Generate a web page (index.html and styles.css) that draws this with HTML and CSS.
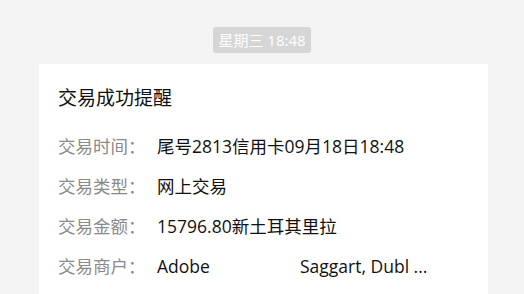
FILE: index.html
```html
<!DOCTYPE html>
<html lang="zh-CN">
<head>
    <meta charset="UTF-8">
    <meta name="viewport" content="width=device-width, initial-scale=1.0">
    <title>交易成功提醒</title>
    <link rel="stylesheet" href="styles.css">
</head>
<body>
    <div class="time-bar">
        <span class="time-tag">星期三 18:48</span>
    </div>
    <div class="card">
        <h1 class="card-title">交易成功提醒</h1>
        <ul class="info-list">
            <li><span class="label">交易时间：</span><span class="value">尾号2813信用卡09月18日18:48</span></li>
            <li><span class="label">交易类型：</span><span class="value">网上交易</span></li>
            <li><span class="label">交易金额：</span><span class="value">15796.80新土耳其里拉</span></li>
            <li><span class="label">交易商户：</span><span class="value"><span class="merchant">Adobe</span>Saggart, Dubl ...</span></li>
        </ul>
    </div>
</body>
</html>
```

FILE: styles.css
```css
body {
    font-family: "Open Sans", "Noto Sans CJK SC", sans-serif;
    background-color: #f4f4f4;
    color: #111;
    margin: 0;
    padding: 0;
}
.time-bar {
    padding-top: 27px;
    text-align: center;
    height: 26px;
}
.time-tag {
    display: inline-block;
    height: 26px;
    line-height: 26px;
    padding: 0 5px;
    background-color: #d6d6d6;
    color: #fff;
    font-size: 15px;
    border-radius: 3px;
}
.card {
    background: #fff;
    margin: 11px 36px 0 39px;
    padding: 22px 19px 20px;
}
.card-title {
    font-size: 19px;
    font-weight: normal;
    line-height: 24px;
    margin: 0 0 16px 0;
}
.info-list {
    list-style-type: none;
    padding: 0;
    margin: 0;
}
.info-list li {
    display: flex;
    height: 40px;
    line-height: 40px;
    font-size: 17.5px;
}
.label {
    width: 99px;
    color: #8a8a8a;
    flex-shrink: 0;
}
.merchant {
    display: inline-block;
    width: 143px;
}
```
